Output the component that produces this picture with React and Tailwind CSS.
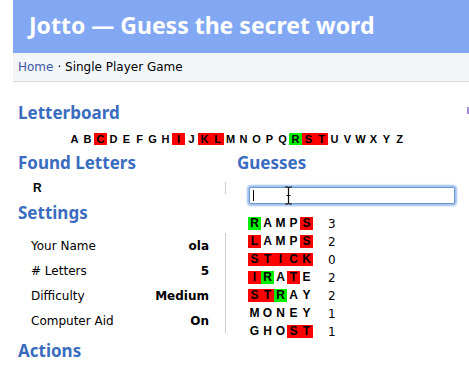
import React from "react";

const RED = "C I K L S T".split(" ");
const GREEN = ["R"];
const ALPHABET = "ABCDEFGHIJKLMNOPQRSTUVWXYZ".split("");

// r = red, g = green, . = plain
const guesses = [
  { word: "RAMPS", marks: "g...r", score: 3 },
  { word: "LAMPS", marks: "r...r", score: 2 },
  { word: "STICK", marks: "rrrrr", score: 0 },
  { word: "IRATE", marks: "rg.r.", score: 2 },
  { word: "STRAY", marks: "rrg..", score: 2 },
  { word: "MONEY", marks: ".....", score: 1 },
  { word: "GHOST", marks: "...rr", score: 1 },
];

const settings = [
  ["Your Name", "ola"],
  ["# Letters", "5"],
  ["Difficulty", "Medium"],
  ["Computer Aid", "On"],
];

const markClass = (m) => {
  if (m === "r") return "bg-[#ff0000]";
  if (m === "g") return "bg-[#00ee00]";
  return "";
};

const Heading = ({ children, className = "" }) => (
  <h2
    className={`text-[17px] leading-[20px] font-bold text-[#3a6cc0] ${className}`}
    style={{ fontFamily: '"Noto Sans", sans-serif' }}
  >
    {children}
  </h2>
);

const App = () => {
  return (
    <div
      className="w-[469px] h-[373px] overflow-hidden bg-white relative"
      style={{ fontFamily: '"DejaVu Sans", sans-serif' }}
    >
      <div className="ml-[13px] h-[53px] bg-[#82a8f4] pl-[16px] flex items-center">
        <h1
          className="text-white text-[23px] font-bold leading-none pb-[2px]"
          style={{ fontFamily: '"Noto Sans", sans-serif' }}
        >
          Jotto — Guess the secret word
        </h1>
      </div>
      <div className="ml-[13px] h-[29px] bg-[#f3f6f9] border-b border-[#dcdcdc] pl-[5px] flex items-center text-[12px] text-black">
        <span className="text-[#3c55a8]">Home</span>
        <span className="ml-[4px]">· Single Player Game</span>
      </div>

      <div className="pl-[18px]">
        <Heading className="mt-[21px]">Letterboard</Heading>
        <div
          className="ml-[50px] mt-[10px] flex h-[12px] text-[11px] leading-[12px] font-bold text-black"
          style={{ fontFamily: '"Liberation Sans", Arial, sans-serif' }}
        >
          {ALPHABET.map((l) => (
            <span
              key={l}
              className={`w-[13px] text-center ${
                RED.includes(l) ? "bg-[#ff0000]" : GREEN.includes(l) ? "bg-[#00ee00]" : ""
              }`}
            >
              {l}
            </span>
          ))}
        </div>

        <div className="flex">
          <div className="w-[208px] shrink-0">
            <Heading className="mt-[8px]">Found Letters</Heading>
            <div
              className="mt-[9px] h-[12px] leading-[12px] border-r border-[#cccccc] pl-[15px] text-[12px] font-bold"
              style={{ fontFamily: '"Liberation Sans", Arial, sans-serif' }}
            >
              R
            </div>
            <Heading className="mt-[9px]">Settings</Heading>
            <div className="mt-[10px] border-r border-[#cccccc] text-[12px] text-black">
              {settings.map(([k, v]) => (
                <div key={k} className="h-[25px] flex items-center justify-between pl-[13px] pr-[16px]">
                  <span>{k}</span>
                  <span className="font-bold">{v}</span>
                </div>
              ))}
            </div>
            <Heading className="mt-[8px]">Actions</Heading>
          </div>

          <div className="pl-[11px] flex-1">
            <Heading className="mt-[8px]">Guesses</Heading>
            <div className="relative mt-[14px] ml-[12px] w-[206px] h-[17px] border border-[#6f9ad6] rounded-[2px] shadow-[0_0_2px_2px_#9dbfec] bg-white">
              <div className="absolute left-[3px] top-[2px] w-px h-[11px] bg-black" />
              <svg
                className="absolute left-[34px] top-[-2px]"
                width="9"
                height="19"
                viewBox="0 0 9 19"
              >
                <path
                  d="M1 1h2.5L4.5 2L5.5 1H8M4.5 2V17M1 18h2.5L4.5 17L5.5 18H8M2.5 9.5h4"
                  fill="none"
                  stroke="#111"
                  strokeWidth="1.2"
                />
              </svg>
            </div>
            <div
              className="mt-[13px] ml-[11px] flex flex-col gap-[5px]"
            >
              {guesses.map((g) => (
                <div key={g.word} className="flex items-center h-[13px]">
                  <div
                    className="flex text-[12px] leading-[13px] font-bold text-black"
                    style={{ fontFamily: '"Liberation Sans", Arial, sans-serif' }}
                  >
                    {g.word.split("").map((l, i) => (
                      <span key={i} className={`w-[13px] text-center ${markClass(g.marks[i])}`}>
                        {l}
                      </span>
                    ))}
                  </div>
                  <span className="ml-[15px] text-[12px] leading-[13px] pt-[2px] text-black">{g.score}</span>
                </div>
              ))}
            </div>
          </div>
        </div>
      </div>

      <div className="absolute left-[467px] top-[107px] w-[2px] h-[7px] bg-[#a58ad8]" />
    </div>
  );
};

export default App;
